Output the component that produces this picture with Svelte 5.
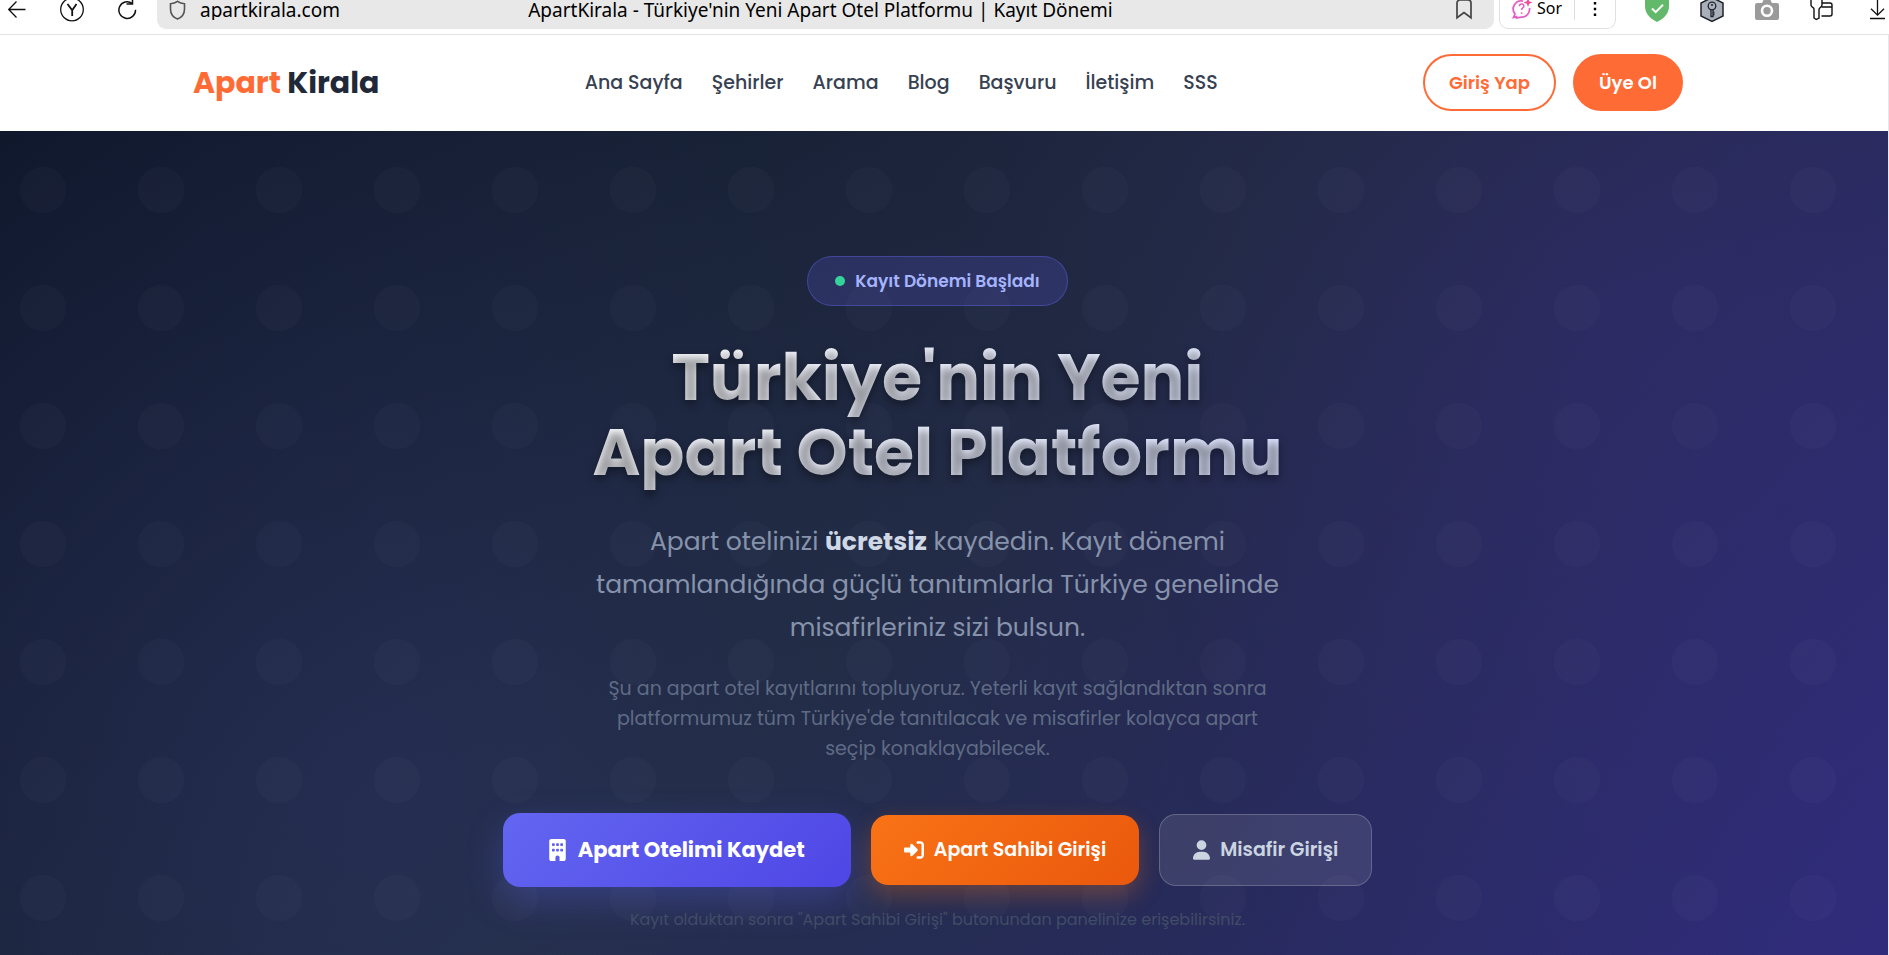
<script>
  const links = ['Ana Sayfa', 'Şehirler', 'Arama', 'Blog', 'Başvuru', 'İletişim', 'SSS']

  let address = $state('apartkirala.com')
</script>

<svelte:head>
  <title>ApartKirala - Türkiye'nin Yeni Apart Otel Platformu | Kayıt Dönemi</title>
</svelte:head>

<div class="toolbar">
  <div class="controls">
    <button aria-label="Geri">
      <svg width="18" height="20" viewBox="0 0 18 20"><path d="M17.500 9.500H1M8.500 1.500L.7 9.500l7.800 8" /></svg>
    </button>
    <button aria-label="Ana sayfa">
      <svg width="24" height="20" viewBox="0 0 24 20">
        <circle cx="12" cy="9.500" r="11.300" />
        <path d="M7.500 4l4.700 6.200V16M16.500 4l-4.300 6.200" stroke-width="1.800" />
      </svg>
    </button>
    <button aria-label="Yenile">
      <svg width="20" height="20" viewBox="0 0 20 20"><path d="M18.500 9.800a8.300 8.300 0 1 1-3.300-6.300M9.500 4h6V-2" stroke-width="1.500" /></svg>
    </button>
  </div>

  <div class="address">
    <label class="url">
      <svg width="17" height="20" viewBox="0 0 17 20"><path d="M8.500 1.300c2 1.500 4.400 2.300 7 2.500V9c0 5-2.600 8.300-7 10-4.400-1.700-7-5-7-10V3.800c2.600-.2 5-1 7-2.500z" stroke="#555" stroke-width="1.600" /></svg>
      <input type="text" aria-label="Adres" bind:value={address}>
    </label>
    <span class="title">ApartKirala - Türkiye'nin Yeni Apart Otel Platformu | Kayıt Dönemi</span>
    <button class="bookmark" aria-label="Yer işareti">
      <svg width="16" height="20" viewBox="0 0 16 20"><path d="M1 17.800V3a3 3 0 0 1 3-3h8a3 3 0 0 1 3 3v14.800L8 12.500z" stroke="#444" stroke-width="1.700" /></svg>
    </button>
  </div>

  <div class="ask">
    <button class="sor">
      <svg width="20" height="20" viewBox="0 0 20 20">
        <g stroke="#e560c4" stroke-width="1.800">
          <path d="M11 1.200A8 8 0 0 0 3 14l-1.500 3.500 3-.8V18l5-.8A8 8 0 0 0 17.500 8" />
          <path d="M7.300 6.300c.3-3.300 5.200-2.800 4.500.2-.3 1.400-2.200 1.400-2.200 3.500M9.600 12.300v1.600" stroke-width="1.500" />
        </g>
        <path d="M16 -2l1.200 3.300L20.500 2.500l-3.300 1.200L16 7l-1.200-3.300L11.500 2.500l3.300-1.200z" fill="#ee4f9b" stroke="none" />
      </svg>
      Sor
    </button>
    <button class="more" aria-label="Menü">
      <svg width="4" height="20" viewBox="0 0 4 20"><path d="M.8 2h2.400v2.400H.8zM.8 7.800h2.400v2.400H.8zM.8 13.500h2.400v2.400H.8z" fill="#000" stroke="none" /></svg>
    </button>
  </div>

  <div class="extensions">
    <button aria-label="Koruma">
      <svg width="24" height="20" viewBox="0 0 24 20">
        <path d="M12-6l12 4v8c0 7-4.500 12.500-12 16C4.500 18.500 0 13 0 6v-8z" fill="#62b96b" stroke="none" />
        <path d="M7 8.500l3.700 3.700L18 4.800" stroke="#fff" stroke-width="2" />
      </svg>
    </button>
    <button aria-label="Parolalar">
      <svg width="24" height="20" viewBox="0 0 24 20">
        <path d="M12-2.500l11 5.500v13l-11 5.500L1 16V3z" fill="#a9b0ba" stroke="#20252d" stroke-width="1.500" />
        <circle cx="12" cy="6" r="3.800" stroke="#20252d" />
        <path d="M11 9.500v7h2v-7M13 12.500h1.500M13 14.500h1.500" stroke="#20252d" />
        <circle cx="12" cy="5" r="1" fill="#20252d" stroke="none" />
      </svg>
    </button>
    <button aria-label="Ekran görüntüsü">
      <svg width="24" height="20" viewBox="0 0 24 20">
        <path d="M7 3l1.500-3h7L17 3h5a2 2 0 0 1 2 2v13a2 2 0 0 1-2 2H2a2 2 0 0 1-2-2V5a2 2 0 0 1 2-2z" fill="#9b9b9b" stroke="none" />
        <circle cx="12" cy="10.800" r="5" stroke="#fff" stroke-width="2.600" fill="#9b9b9b" />
      </svg>
    </button>
    <button aria-label="Kartlar">
      <svg width="24" height="20" viewBox="0 0 24 20">
        <path d="M1-3v8c0 2.200 3 2.500 3 4v9l2.200 1.500L9 18V9.500c0-1.500 3-2.500 3-4.500v-8" stroke-width="1.400" />
        <path d="M12 3h8a2 2 0 0 1 2 2v9a2 2 0 0 1-2 2H11.500M11.500 7H22" stroke-width="1.400" />
      </svg>
    </button>
    <button aria-label="İndirilenler">
      <svg width="24" height="20" viewBox="0 0 24 20"><path d="M12.500-4v19M6 8.800l6.500 6.400L19 8.800M5 18.500h15" /></svg>
    </button>
  </div>
</div>

<div class="page">
  <header>
    <div class="bar">
      <a class="logo" href="#top"><span>Apart</span> Kirala</a>
      <nav>
        {#each links as link}
          <a href="#top">{link}</a>
        {/each}
      </nav>
      <div class="auth">
        <a class="login" href="#top">Giriş Yap</a>
        <a class="signup" href="#top">Üye Ol</a>
      </div>
    </div>
  </header>

  <main class="hero" id="top">
    <div class="badge"><i></i>Kayıt Dönemi Başladı</div>

    <h1>Türkiye'nin Yeni<br>Apart Otel Platformu</h1>

    <p class="lead">
      Apart otelinizi <strong>ücretsiz</strong> kaydedin. Kayıt dönemi
      tamamlandığında güçlü tanıtımlarla Türkiye genelinde
      misafirleriniz sizi bulsun.
    </p>
    <p class="info">
      Şu an apart otel kayıtlarını topluyoruz. Yeterli kayıt sağlandıktan sonra
      platformumuz tüm Türkiye'de tanıtılacak ve misafirler kolayca apart
      seçip konaklayabilecek.
    </p>

    <div class="actions">
      <a class="btn primary" href="#top">
        <svg width="17" height="22" viewBox="0 0 384 512"><path d="M48 0C21.500 0 0 21.500 0 48V464c0 26.500 21.500 48 48 48h96V432c0-26.500 21.500-48 48-48s48 21.500 48 48v80h96c26.500 0 48-21.500 48-48V48c0-26.500-21.500-48-48-48H48zM64 240c0-8.800 7.200-16 16-16h32c8.800 0 16 7.200 16 16v32c0 8.800-7.200 16-16 16H80c-8.800 0-16-7.200-16-16V240zm112-16h32c8.800 0 16 7.200 16 16v32c0 8.800-7.200 16-16 16H176c-8.800 0-16-7.200-16-16V240c0-8.800 7.200-16 16-16zm80 16c0-8.800 7.200-16 16-16h32c8.800 0 16 7.200 16 16v32c0 8.800-7.200 16-16 16H272c-8.800 0-16-7.200-16-16V240zM80 96h32c8.800 0 16 7.200 16 16v32c0 8.800-7.200 16-16 16H80c-8.800 0-16-7.200-16-16V112c0-8.800 7.200-16 16-16zm80 16c0-8.800 7.200-16 16-16h32c8.800 0 16 7.200 16 16v32c0 8.800-7.200 16-16 16H176c-8.800 0-16-7.200-16-16V112zM272 96h32c8.800 0 16 7.200 16 16v32c0 8.800-7.200 16-16 16H272c-8.800 0-16-7.200-16-16V112c0-8.800 7.200-16 16-16z" /></svg>
        Apart Otelimi Kaydet
      </a>
      <a class="btn owner" href="#top">
        <svg width="20" height="20" viewBox="0 0 512 512"><path d="M217.900 105.900L340.700 228.700c7.200 7.200 11.300 17.100 11.300 27.300s-4.100 20.100-11.300 27.300L217.900 406.100c-6.400 6.400-15 9.900-24 9.900c-18.700 0-33.900-15.200-33.900-33.900l0-62.100L32 320c-17.700 0-32-14.300-32-32l0-64c0-17.700 14.300-32 32-32l128 0 0-62.100c0-18.700 15.200-33.900 33.900-33.900c9 0 17.600 3.600 24 9.900zM352 416l64 0c17.700 0 32-14.300 32-32l0-256c0-17.700-14.300-32-32-32l-64 0c-17.700 0-32-14.300-32-32s14.300-32 32-32l64 0c53 0 96 43 96 96l0 256c0 53-43 96-96 96l-64 0c-17.700 0-32-14.300-32-32s14.300-32 32-32z" /></svg>
        Apart Sahibi Girişi
      </a>
      <a class="btn guest" href="#top">
        <svg width="17" height="20" viewBox="0 0 448 512"><path d="M224 256A128 128 0 1 0 224 0a128 128 0 1 0 0 256zm-45.700 48C79.800 304 0 383.800 0 482.300C0 498.700 13.300 512 29.700 512H418.300c16.400 0 29.700-13.300 29.700-29.700C448 383.800 368.200 304 269.700 304H178.300z" /></svg>
        Misafir Girişi
      </a>
    </div>

    <p class="note">Kayıt olduktan sonra "Apart Sahibi Girişi" butonundan panelinize erişebilirsiniz.</p>
  </main>
</div>

<style>
  :global(body) {
    background: #fff;
  }

  :global(#app) {
    display: flex;
    flex-direction: column;
    min-height: 100vh;
  }

  a {
    text-decoration: none;
    white-space: nowrap;
  }

  .toolbar {
    display: flex;
    align-items: flex-start;
    height: 34px;
    overflow: hidden;
    border-bottom: 1px solid #e3e3e3;
    font: 19px/20px 'Noto Sans', sans-serif;
    color: #000;
  }

  .toolbar button {
    display: flex;
    align-items: center;
    justify-content: center;
    height: 20px;
    padding: 0;
    border: 0;
    background: none;
    font: inherit;
    color: inherit;
  }

  .toolbar svg {
    flex: none;
    overflow: visible;
    fill: none;
    stroke: #111;
    stroke-width: 1.3;
  }

  .controls {
    display: flex;
    gap: 21px;
    margin-right: 13px;
  }

  .controls button {
    width: 34px;
  }

  .address {
    flex: 1;
    display: grid;
    grid-template-columns: 1fr auto 1fr;
    padding: 0 22px 9px 12px;
    border-radius: 0 0 9px 9px;
    background: #e8e8e8;
    white-space: nowrap;
  }

  .url {
    display: flex;
    gap: 14px;
    min-width: 0;
  }

  .url input {
    width: 100%;
    min-width: 0;
    height: 20px;
    padding: 0;
    border: 0;
    outline: 0;
    background: none;
    font: inherit;
    color: inherit;
  }

  .toolbar .bookmark {
    justify-self: end;
  }

  .ask {
    display: flex;
    margin-left: 5px;
    padding-bottom: 8px;
    border: 1px solid #e0e0e0;
    border-top: 0;
    border-radius: 0 0 9px 9px;
  }

  .toolbar .sor {
    gap: 5px;
    padding: 0 12px;
    border-right: 1px solid #ddd;
    font-size: 16px;
    line-height: 16px;
    align-items: flex-start;
  }

  .toolbar .more {
    width: 40px;
  }

  .extensions {
    display: flex;
    gap: 31px;
    margin-left: 29px;
  }

  .extensions button {
    width: 24px;
  }

  .page {
    flex: 1;
    display: flex;
    flex-direction: column;
    border-right: 1px solid #e5e7eb;
    font-family: Poppins, Inter, sans-serif;
  }

  header {
    padding-right: 12px;
    background: #fff;
  }

  .bar {
    display: flex;
    align-items: center;
    justify-content: space-between;
    max-width: 1490px;
    margin: 0 auto;
    padding: 19px 0 20px;
  }

  .logo {
    font-size: 30px;
    font-weight: 700;
    line-height: 40px;
    color: #1f2937;
  }

  .logo span {
    color: #ff6b35;
  }

  nav {
    display: flex;
    gap: 29px;
  }

  nav a {
    font-size: 19px;
    font-weight: 500;
    line-height: 30px;
    color: #374151;
  }

  .auth {
    display: flex;
    gap: 17px;
  }

  .auth a {
    padding: 14px 24px;
    border: 2px solid #ff6b35;
    border-radius: 29px;
    font-size: 18px;
    font-weight: 600;
    line-height: 25px;
  }

  .login {
    color: #ff6b35;
  }

  .signup {
    background: #ff6b35;
    color: #fff;
  }

  .hero {
    flex: 1;
    display: flex;
    flex-direction: column;
    align-items: center;
    box-sizing: border-box;
    padding: 125px 13px 23px 0;
    text-align: center;
    background:
      url("data:image/svg+xml,%3Csvg xmlns='http://www.w3.org/2000/svg' width='118' height='118'%3E%3Ccircle cx='59' cy='59' r='23' fill='%23fff' fill-opacity='.02'/%3E%3C/svg%3E") -16px center,
      radial-gradient(circle at 20% 80%, rgba(99, 102, 241, .14), transparent 50%),
      radial-gradient(circle at 85% 20%, rgba(99, 50, 220, .14), transparent 50%),
      linear-gradient(135deg, #0f172a 0%, #1e293b 50%, #2f2c7a 100%);
  }

  .badge {
    display: flex;
    align-items: center;
    gap: 10px;
    padding: 11px 27px;
    border: 1px solid rgba(99, 102, 241, .4);
    border-radius: 25px;
    background: rgba(99, 102, 241, .2);
    font-size: 17px;
    font-weight: 600;
    line-height: 26px;
    color: #a5b4fc;
  }

  .badge i {
    width: 10px;
    height: 10px;
    border-radius: 50%;
    background: #34d399;
  }

  h1 {
    margin: 34px 0 30px;
    font-size: 65px;
    font-weight: 700;
    line-height: 75px;
    background: linear-gradient(135deg, #fff 0%, #dbe3ff 100%);
    background-clip: text;
    color: transparent;
    text-shadow: 0 4px 8px rgba(0, 0, 0, .38);
  }

  p {
    margin: 0;
  }

  .lead {
    max-width: 700px;
    font-size: 25px;
    line-height: 43px;
    color: #8792ab;
  }

  .lead strong {
    color: #d0d8e6;
  }

  .info {
    max-width: 680px;
    margin: 25px 0 49px;
    font-size: 19px;
    line-height: 30px;
    color: #5f6b85;
  }

  .actions {
    display: flex;
    flex-wrap: wrap;
    align-items: center;
    justify-content: center;
    gap: 20px;
    margin-bottom: 20px;
  }

  .btn {
    display: flex;
    align-items: center;
    gap: 10px;
    padding: 20px 33px;
    border-radius: 17px;
    font-size: 19px;
    font-weight: 600;
    line-height: 30px;
    color: #fff;
  }

  .btn svg {
    fill: currentColor;
  }

  .primary {
    gap: 12px;
    padding: 22px 46px;
    background: linear-gradient(135deg, #6366f1, #4f46e5);
    box-shadow: 0 14px 36px rgba(99, 102, 241, .3);
    font-size: 21px;
    font-weight: 700;
  }

  .owner {
    background: linear-gradient(135deg, #f97316, #ea580c);
    box-shadow: 0 10px 24px rgba(249, 115, 22, .3);
  }

  .guest {
    border: 1px solid rgba(255, 255, 255, .2);
    background: rgba(255, 255, 255, .1);
    color: #cbd5e1;
  }

  .note {
    font-size: 16px;
    line-height: 26px;
    color: #414c66;
  }
</style>
